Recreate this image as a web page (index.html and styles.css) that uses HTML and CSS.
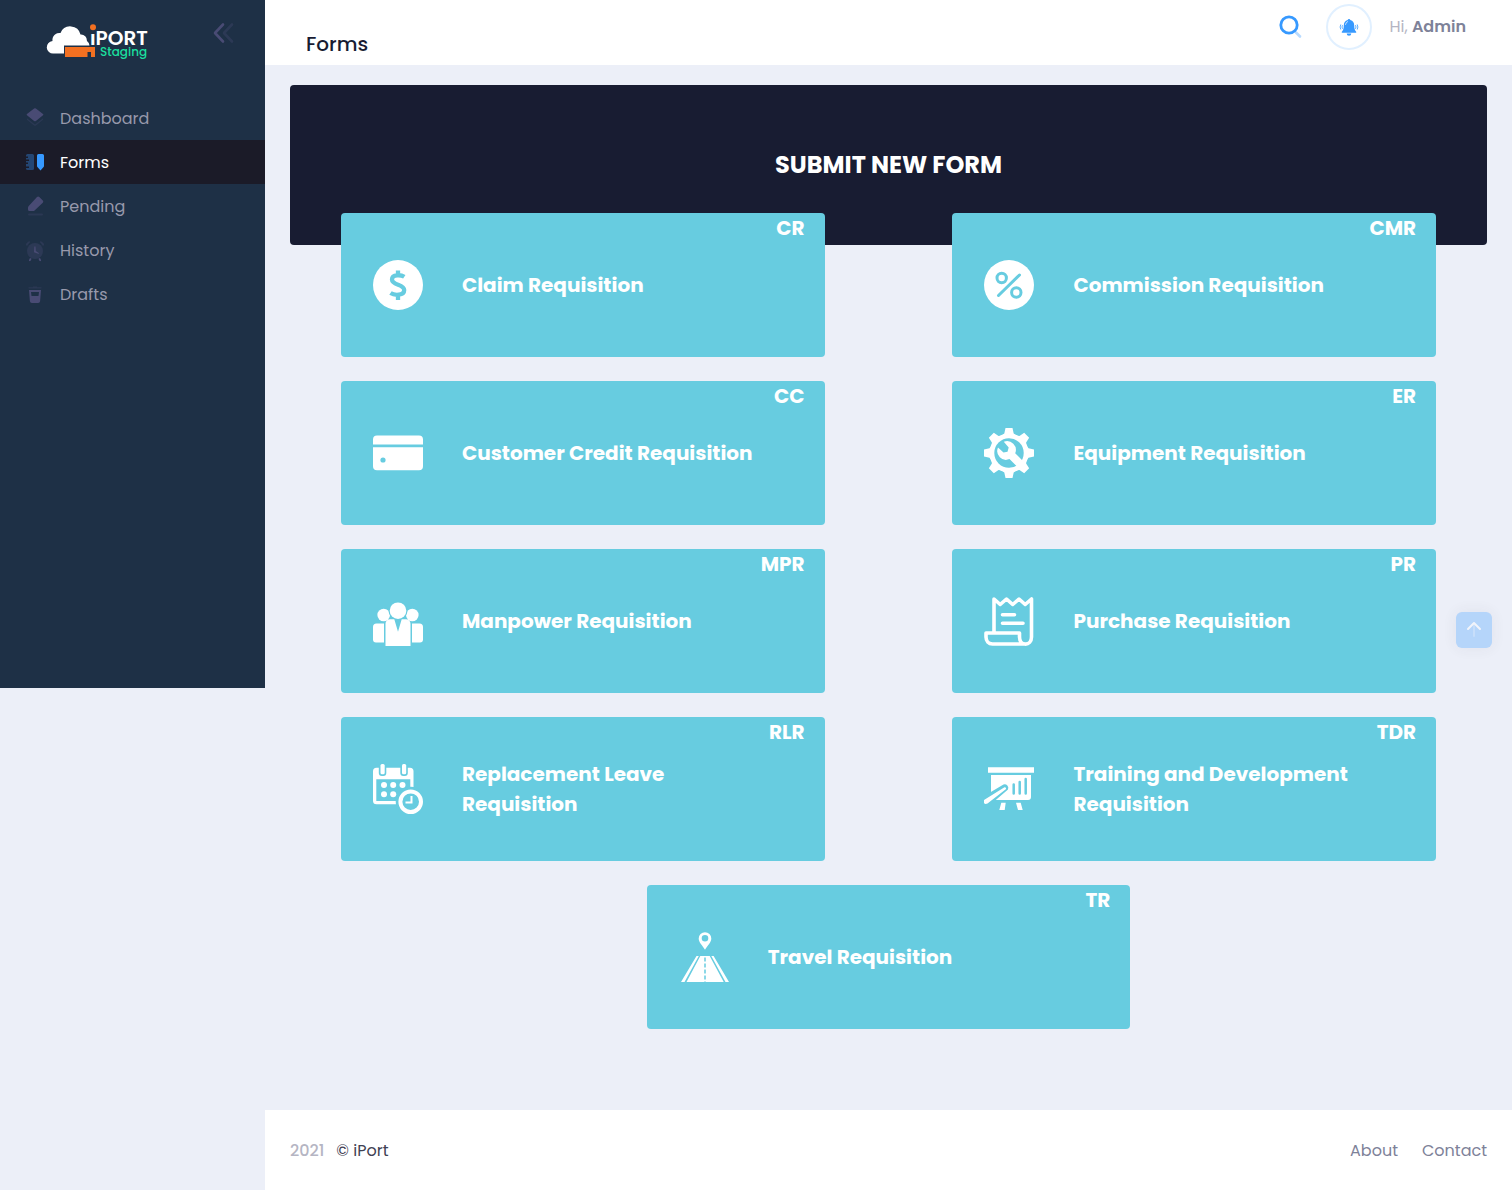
FILE: index.html
```html
<!DOCTYPE html>
<html lang="en">
<head>
<meta charset="utf-8">
<meta name="viewport" content="width=device-width, initial-scale=1">
<title>iPort | Forms</title>
<link rel="stylesheet" href="styles.css">
</head>
<body>
<div class="app">
  <aside class="sidebar">
    <div class="brand">
      <a class="brand-link" href="#" aria-label="iPort Staging">
        <svg width="112" height="48" viewBox="0 0 112 48">
          <path class="white" d="M13.500 35.500a6.200 6.200 0 0 1-1-12.500a7 7 0 0 1 8-8a10.500 10.500 0 0 1 20 1.500a6 6 0 0 1 6.500 6.500a6 6 0 0 1 2.500 4.500H24v8z"/>
          <path class="orange" d="M25 29h30v10h-4v-5h-3.500v5H25z"/>
          <text class="logo-name" x="50" y="27">iPORT</text>
          <rect class="logo-gap" x="50" y="6" width="6" height="9"/>
          <circle class="orange" cx="53" cy="9.200" r="3"/>
          <text class="logo-env" x="60" y="38">Staging</text>
        </svg>
      </a>
      <button class="toggle" type="button" aria-label="Collapse menu">
        <svg width="24" height="24" viewBox="0 0 24 24" fill="none" stroke-width="2.600" stroke-linecap="round" stroke-linejoin="round"><path d="M12 3.500L4 12L12 20.500"/><path opacity=".35" d="M21 3.500L13 12L21 20.500"/></svg>
      </button>
    </div>
    <nav class="menu">
      <a class="menu-item" href="#">
        <svg width="24" height="24" viewBox="0 0 24 24"><path d="M12.900 2.500L20 8a.8.8 0 0 1 0 1.300L12.900 15a1.500 1.500 0 0 1-1.800 0L4 9.300A.8.8 0 0 1 4 8l7.100-5.500a1.500 1.500 0 0 1 1.800 0z"/><path opacity=".3" d="M12 18.500l8-6.300v1.600l-7 5.600a1.600 1.600 0 0 1-2 0l-7-5.600v-1.600z"/></svg>
        <span>Dashboard</span>
      </a>
      <a class="menu-item active" href="#" aria-current="page">
        <svg width="24" height="24" viewBox="0 0 24 24"><path opacity=".35" d="M5 4h4.500a1.500 1.500 0 0 1 1.500 1.500v13A1.500 1.500 0 0 1 9.500 20h-5A1.500 1.500 0 0 1 3 18.500V18h3v-1.500H3V14h2v-1.500H3V11h3V9.500H3V8h2V6.500H3V5.500A1.500 1.500 0 0 1 4.500 4z"/><path d="M15.500 4h4A1.500 1.500 0 0 1 21 5.500v10.600a1.500 1.500 0 0 1-.4 1L17.500 20.500l-3.100-3.400a1.500 1.500 0 0 1-.4-1V5.500A1.500 1.500 0 0 1 15.500 4z"/></svg>
        <span>Forms</span>
      </a>
      <a class="menu-item" href="#">
        <svg width="24" height="24" viewBox="0 0 24 24"><path d="M5.500 12.200L14 3a1.600 1.600 0 0 1 2.300 0l3.500 3.600a1.600 1.600 0 0 1 0 2.200L11 17H6.500A1.500 1.500 0 0 1 5 15.500v-2z"/><rect opacity=".3" x="5" y="19.500" width="15" height="2" rx="1"/></svg>
        <span>Pending</span>
      </a>
      <a class="menu-item" href="#">
        <svg width="24" height="24" viewBox="0 0 24 24"><circle opacity=".35" cx="12" cy="13" r="8"/><path opacity=".35" d="M3.300 7.500a1.500 1.500 0 0 1 0-2L5.200 3.700a1.500 1.500 0 0 1 2.100 0L4.200 7.700zM20.700 7.500a1.500 1.500 0 0 0 0-2l-1.900-1.800a1.500 1.500 0 0 0-2.100 0l3.100 4z"/><path d="M11.300 8.500h1.200l.3 4.500 3 2v1l-4.800-1.800zM7 20l1.600.8-1 2a.9.900 0 0 1-1.600-.8zM17 20l-1.600.8 1 2a.9.900 0 0 0 1.600-.8z"/></svg>
        <span>History</span>
      </a>
      <a class="menu-item" href="#">
        <svg width="24" height="24" viewBox="0 0 24 24"><path fill-rule="evenodd" d="M6 8h12l-.9 11.200A2 2 0 0 1 15.100 21H8.900a2 2 0 0 1-2-1.800zM8 10l.5 4h7l.5-4z"/><path opacity=".3" d="M10 4.500h4v.7h4.500V6.500h-13V5.200H10z"/></svg>
        <span>Drafts</span>
      </a>
    </nav>
  </aside>

  <div class="page">
    <header class="topbar">
      <h1 class="page-title">Forms</h1>
      <div class="tools">
        <button class="search" type="button" aria-label="Search">
          <svg width="24" height="24" viewBox="0 0 24 24" fill="none" stroke="#3699ff" stroke-linecap="round"><path opacity=".35" stroke-width="2.600" d="M18 17.500L22 21.500"/><circle cx="11" cy="10" r="8.200" stroke-width="2.800"/></svg>
        </button>
        <button class="bell" type="button" aria-label="Notifications">
          <svg width="20" height="20" viewBox="0 0 20 20" fill="#3699ff"><path d="M10 2a1.300 1.300 0 0 1 1.300 1.100C14 3.700 15.200 6 15.200 8.500c0 3.500.8 5 2 6.300v1H2.800v-1c1.200-1.300 2-2.800 2-6.300C4.800 6 6 3.700 8.700 3.100A1.300 1.300 0 0 1 10 2zM7.700 16.500h4.600a2.300 2.300 0 0 1-4.600 0z"/><path fill="none" stroke="#3699ff" stroke-width=".8" stroke-linecap="round" d="M3.300 8.500q-.8 1.500 0 3M1.600 7.800q-1.200 2.200 0 4.400M16.700 8.500q.8 1.500 0 3M18.400 7.800q1.200 2.200 0 4.400"/><path fill="none" stroke="#fff" stroke-width=".7" stroke-linecap="round" d="M6.500 7.500q.3-2.300 2.200-3"/></svg>
        </button>
        <a class="user" href="#">Hi, <strong>Admin</strong></a>
      </div>
    </header>

    <main class="content">
      <section class="banner"><h2>SUBMIT NEW FORM</h2></section>
      <div class="cards">
        <div class="cell"><a class="card" href="#">
          <svg class="icon" viewBox="0 0 50 50"><circle cx="25" cy="25" r="25"/><path class="cut-line" stroke-width="4.300" d="M31.300 16.800C28.500 15 19 13.700 19 19.500c0 6 12.200 4.500 12.200 10.500 0 6-10 5.500-13.700 3M25 10.500v5M25 34.500v5.500"/></svg>
          <span class="name">Claim Requisition</span><span class="code">CR</span></a></div>
        <div class="cell"><a class="card" href="#">
          <svg class="icon" viewBox="0 0 50 50"><circle cx="25" cy="25" r="25"/><path class="cut-line" stroke-width="3" stroke-linecap="round" d="M14.500 35.500L35.500 15"/><circle class="cut-line" stroke-width="3" cx="17.700" cy="18" r="4.700"/><circle class="cut-line" stroke-width="3" cx="32.300" cy="32.500" r="4.700"/></svg>
          <span class="name">Commission Requisition</span><span class="code">CMR</span></a></div>
        <div class="cell"><a class="card" href="#">
          <svg class="icon" viewBox="0 0 50 50"><path d="M4 7.500h42a4 4 0 0 1 4 4v5H0v-5a4 4 0 0 1 4-4zM0 19.200h50v19a4 4 0 0 1-4 4H4a4 4 0 0 1-4-4z"/><circle class="cut" cx="10" cy="32" r="2.600"/></svg>
          <span class="name">Customer Credit Requisition</span><span class="code">CC</span></a></div>
        <div class="cell"><a class="card" href="#">
          <svg class="icon" viewBox="0 0 50 50"><circle cx="25" cy="25" r="19.500"/><g id="teeth"><path id="tooth" d="M21.500 0h7l1.200 5.500 4 3h-17.400l4-3z"/><use href="#tooth" transform="rotate(45 25 25)"/><use href="#tooth" transform="rotate(90 25 25)"/><use href="#tooth" transform="rotate(135 25 25)"/></g><use href="#teeth" transform="rotate(180 25 25)"/><circle class="cut" cx="25" cy="25" r="14.700"/><path d="M19.800 13.800a8.800 8.800 0 0 1 11.400 11.500l9 9-6 5.500-8.700-8.700A8.800 8.800 0 0 1 14 19.500l5.500 5 4-.8 1.200-4.200z"/></svg>
          <span class="name">Equipment Requisition</span><span class="code">ER</span></a></div>
        <div class="cell"><a class="card" href="#">
          <svg class="icon" viewBox="0 0 50 50"><circle cx="10.700" cy="19" r="6.300"/><circle cx="39.300" cy="19" r="6.300"/><circle class="cut" cx="25" cy="14.700" r="9.500"/><circle cx="25" cy="14.700" r="8.300"/><path d="M3.500 27.500H11v19H3A3 3 0 0 1 0 43.500V31a3.500 3.500 0 0 1 3.500-3.500zM39 27.500h7.500A3.500 3.500 0 0 1 50 31v12.500a3 3 0 0 1-3 3h-8zM17 23.300h4.300L25 35.700l3.700-12.400H33a4.500 4.500 0 0 1 4.500 4.500V50h-25V27.800a4.500 4.500 0 0 1 4.500-4.500z"/></svg>
          <span class="name">Manpower Requisition</span><span class="code">MPR</span></a></div>
        <div class="cell"><a class="card" href="#">
          <svg class="icon" viewBox="0 0 50 50"><path class="line" stroke-width="3.600" d="M10 36V3l6.200 5.500L22.500 3l6.200 5.500L35 3l6.200 5.500L47.500 3v38c0 9.500-12 9.500-12 0v-4H2v4c0 4 2.500 7 6.500 7h33M18.500 18.700h12M18.500 27.200h20.500"/></svg>
          <span class="name">Purchase Requisition</span><span class="code">PR</span></a></div>
        <div class="cell"><a class="card" href="#">
          <svg class="icon" viewBox="0 0 50 50"><path fill-rule="evenodd" d="M3.500 3.700h33.500a3.500 3.500 0 0 1 3.500 3.500v33.100h-37A3.500 3.500 0 0 1 0 36.800V7.200a3.500 3.500 0 0 1 3.500-3.500zM3.300 15.300V37h34V15.300z"/><rect class="cut" x="5.800" y="0" width="7.500" height="12" rx="3"/><rect class="cut" x="27.300" y="0" width="7.500" height="12" rx="3"/><rect x="7.500" y="0" width="4.200" height="10.300" rx="1.500"/><rect x="29" y="0" width="4.200" height="10.300" rx="1.500"/><circle cx="11" cy="21" r="3"/><circle cx="20.200" cy="21" r="3"/><circle cx="29.500" cy="21" r="3"/><circle cx="11" cy="30.300" r="3"/><circle cx="20.200" cy="30.300" r="3"/><circle class="cut" cx="37.700" cy="37.700" r="15"/><circle class="line" stroke-width="4" cx="37.700" cy="37.700" r="10.300"/><path d="M37.500 32h2v7.500h-7v-2h5z"/></svg>
          <span class="name">Replacement Leave Requisition</span><span class="code">RLR</span></a></div>
        <div class="cell"><a class="card" href="#">
          <svg class="icon" viewBox="0 0 50 50"><path d="M4 3.300h46v5.400H4zM7 11h40v22a3 3 0 0 1-3 3H7zM17.300 38.700h4.400L20.700 46h-5.400zM32 38.700h4.700l2 7.300H34z"/><path class="cut-line" stroke-width="2.500" stroke-linecap="round" d="M29.700 20.500v9M35.700 18v11.500M41.700 15v14.500"/><path class="cut" d="M6 28.500L19.500 20.500a3.700 3.700 0 0 1 4.500 5L10 37.500H6z"/><path d="M0 36l20.500-12.700a1.200 1.200 0 0 1 1.300 1.900L3.500 39.500q-2.500 1-3.500-.5z"/></svg>
          <span class="name">Training and Development Requisition</span><span class="code">TDR</span></a></div>
        <div class="cell"><a class="card" href="#">
          <svg class="icon" viewBox="0 0 50 50"><path fill-rule="evenodd" d="M26 .2a6.300 6.300 0 0 1 6.300 6.300C32.300 10.500 28.500 13.500 26 17.700 23.500 13.500 19.700 10.500 19.700 6.500A6.300 6.300 0 0 1 26 .2zM26 3a3.300 3.300 0 1 0 0 6.600A3.300 3.300 0 1 0 26 3z"/><path d="M17.500 24h2.300L5.500 50H2zM21.300 24h9.400l14 26H7.500zM32.300 24h2.300L50 50h-3.500z"/><path class="cut-line" stroke-width="1.500" stroke-dasharray="4 2" d="M26 25.500V50"/></svg>
          <span class="name">Travel Requisition</span><span class="code">TR</span></a></div>
      </div>
    </main>

    <footer class="footer">
      <p class="copyright"><span class="year">2021</span><a href="#">© iPort</a></p>
      <nav class="footer-links"><a href="#">About</a><a href="#">Contact</a></nav>
    </footer>
  </div>
</div>
<a class="scroll-top" href="#" aria-label="Back to top">
  <svg width="24" height="24" viewBox="0 0 24 24" fill="none" stroke="#fff" stroke-width="2" stroke-linecap="round" stroke-linejoin="round"><path opacity=".3" d="M12 7v11"/><path d="M6 11l6-6 6 6"/></svg>
</a>
</body>
</html>
```
FILE: styles.css
```css
* { box-sizing: border-box; }

body {
  margin: 0;
  background: #eceff8;
  color: #3f4254;
  font-family: Poppins, "Open Sans", sans-serif;
  font-size: 16px;
  line-height: 24px;
}

h1, h2, p { margin: 0; }
a { color: inherit; text-decoration: none; }
button { padding: 0; border: 0; background: none; cursor: pointer; }
svg { display: block; flex: none; }

.app { display: flex; align-items: flex-start; min-height: 100vh; }

/* Sidebar */
.sidebar {
  flex: 0 0 265px;
  padding-bottom: 372px;
  background: #1e3046;
}
.brand {
  display: flex;
  align-items: center;
  justify-content: space-between;
  height: 65px;
  padding: 0 30px 0 40px;
}
.brand-link { padding-top: 19px; }
.toggle svg { stroke: #494b74; }
.white { fill: #fff; }
.orange { fill: #f37021; }
.logo-gap { fill: #1e3046; }
.logo-name { fill: #fff; font-size: 20px; font-weight: 600; }
.logo-env { fill: #1bdf9e; font-size: 12px; font-weight: 500; }

.menu { padding-top: 31px; }
.menu-item {
  display: flex;
  align-items: center;
  gap: 13px;
  height: 44px;
  padding: 0 23px;
  color: #9899ac;
}
.menu-item span { padding-top: 2px; }
.menu-item svg { fill: #494b74; }
.menu-item.active { background: #1b1b28; color: #fff; }
.menu-item.active svg { fill: #3699ff; }

/* Page column */
.page {
  display: flex;
  flex: 1;
  flex-direction: column;
  min-width: 0;
  min-height: 100vh;
}
.topbar {
  display: flex;
  align-items: flex-start;
  justify-content: space-between;
  height: 65px;
  padding: 0 46px 0 41px;
  background: #fff;
}
.page-title {
  padding-top: 29px;
  color: #181c32;
  font-size: 20px;
  font-weight: 500;
  line-height: 30px;
}
.tools { display: flex; align-items: center; padding-top: 4px; }
.search { margin-right: 24px; }
.bell {
  display: grid;
  place-items: center;
  width: 46px;
  height: 46px;
  margin-right: 17px;
  border: 2px solid #e1f0ff;
  border-radius: 50%;
}
.user { color: #b5b5c3; }
.user strong { color: #7e8299; font-weight: 600; }

.content { flex: 1; padding: 20px 25px 57px; }
.banner {
  display: flex;
  justify-content: center;
  height: 160px;
  padding-top: 62px;
  border-radius: 4px;
  background: #181c32;
  color: #fff;
}
.banner h2 { font-size: 24px; font-weight: 700; line-height: 36px; }

.cards {
  display: flex;
  flex-wrap: wrap;
  justify-content: space-around;
  margin: -32px -13px 0;
}
.cell { flex: 0 0 calc(100% * 5 / 12); padding: 0 13px 24px; }
.card {
  position: relative;
  display: flex;
  align-items: center;
  gap: 39px;
  height: 144px;
  padding: 0 56px 0 32px;
  border-radius: 4px;
  background: #67cce0;
  color: #fff;
  font-size: 20px;
  font-weight: 700;
  line-height: 30px;
}
.code { position: absolute; top: 0; right: 20px; }
.icon { width: 50px; height: 50px; fill: #fff; }
.icon .cut { fill: #67cce0; }
.icon .cut-line { fill: none; stroke: #67cce0; }
.icon .line { fill: none; stroke: #fff; stroke-linecap: round; stroke-linejoin: round; }

.footer {
  display: flex;
  align-items: center;
  justify-content: space-between;
  height: 80px;
  padding: 2px 25px 0;
  background: #fff;
}
.year { margin-right: 12px; color: #b5b5c3; font-weight: 500; }
.footer-links { display: flex; gap: 24px; color: #7e8299; }

.scroll-top {
  position: fixed;
  top: 612px;
  right: 20px;
  display: grid;
  place-items: center;
  width: 36px;
  height: 36px;
  border-radius: 6px;
  background: #3699ff;
  box-shadow: 0 0 15px 1px rgba(69, 65, 78, 0.2);
  opacity: 0.3;
}
```
